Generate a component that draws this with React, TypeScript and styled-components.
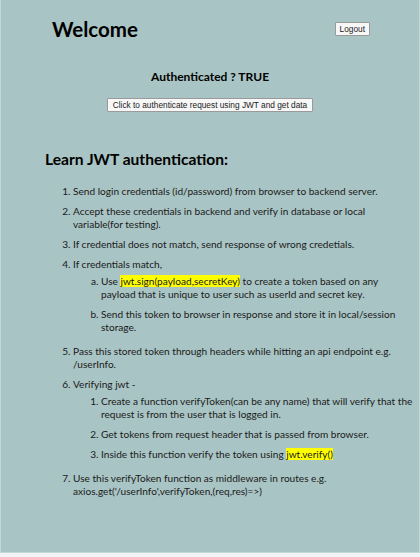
import React from "react";
import styled, { createGlobalStyle } from "styled-components";

const Global = createGlobalStyle`
  html, body { margin: 0; padding: 0; background: #f0f2f5; }
  body { font-family: Lato, "Open Sans", sans-serif; }
`;

const Page = styled.div`
  box-sizing: border-box;
  width: 420px;
  height: 553px;
  background: #a9c4c4;
  border: 1px solid #c4d6d6;
  border-top: none;
  color: #111;
  overflow: hidden;
`;

const Header = styled.header`
  display: flex;
  justify-content: space-between;
  align-items: center;
  padding: 15px 49px 0 51px;
`;

const Title = styled.h1`
  margin: 0;
  font-size: 20.5px;
  font-weight: 700;
  line-height: 28px;
  color: #000;
`;

const SmallButton = styled.button`
  font-family: "Liberation Sans", Arial, sans-serif;
  font-size: 8.3px;
  color: #222;
  background: #f7f7f7;
  border: 1px solid #9a9a9a;
  border-radius: 1px;
  padding: 0 4px;
  height: 14px;
  line-height: 12px;
  cursor: pointer;
`;

const Center = styled.section`
  display: flex;
  flex-direction: column;
  align-items: center;
  padding-top: 25px;
`;

const Status = styled.div`
  font-size: 12px;
  font-weight: 700;
  color: #000;
  line-height: 18px;
`;

const ActionButton = styled(SmallButton)`
  margin-top: 12px;
  padding: 0 5px;
`;

const Learn = styled.section`
  padding: 36px 5px 0 44px;
`;

const Heading = styled.h2`
  margin: 0;
  font-size: 15.6px;
  font-weight: 700;
  line-height: 22px;
  color: #000;
`;

const List = styled.ol<{ $type?: string; $nested?: boolean }>`
  margin: ${(p) => (p.$nested ? "4px 0 11px" : "15px 0 0")};
  padding-left: 28px;
  list-style-type: ${(p) => p.$type || "decimal"};
  font-size: 10.1px;
  line-height: 13px;
  color: #1a1a1a;
`;

const Item = styled.li`
  margin-bottom: 7px;
  &:last-child { margin-bottom: 0; }
`;

const Mark = styled.span`
  background: #ffff00;
`;

export default function App() {
  return (
    <>
      <Global />
      <Page>
        <Header>
          <Title>Welcome</Title>
          <SmallButton>Logout</SmallButton>
        </Header>
        <Center>
          <Status>Authenticated ? TRUE</Status>
          <ActionButton>Click to authenticate request using JWT and get data</ActionButton>
        </Center>
        <Learn>
          <Heading>Learn JWT authentication:</Heading>
          <List>
            <Item>Send login credentials (id/password) from browser to backend server.</Item>
            <Item>Accept these credentials in backend and verify in database or local variable(for testing).</Item>
            <Item>If credential does not match, send response of wrong credetials.</Item>
            <Item>
              If credentials match,
              <List $nested $type="lower-alpha">
                <Item>
                  Use <Mark>jwt.sign(payload,secretKey)</Mark> to create a token based on any payload that is unique to user such as userId and secret key.
                </Item>
                <Item>Send this token to browser in response and store it in local/session storage.</Item>
              </List>
            </Item>
            <Item>Pass this stored token through headers while hitting an api endpoint e.g. /userInfo.</Item>
            <Item>
              Verifying jwt -
              <List $nested>
                <Item>Create a function verifyToken(can be any name) that will verify that the request is from the user that is logged in.</Item>
                <Item>Get tokens from request header that is passed from browser.</Item>
                <Item>
                  Inside this function verify the token using <Mark>jwt.verify()</Mark>
                </Item>
              </List>
            </Item>
            <Item>Use this verifyToken function as middleware in routes e.g. axios.get('/userInfo',verifyToken,(req,res)=&gt;)</Item>
          </List>
        </Learn>
      </Page>
    </>
  );
}
